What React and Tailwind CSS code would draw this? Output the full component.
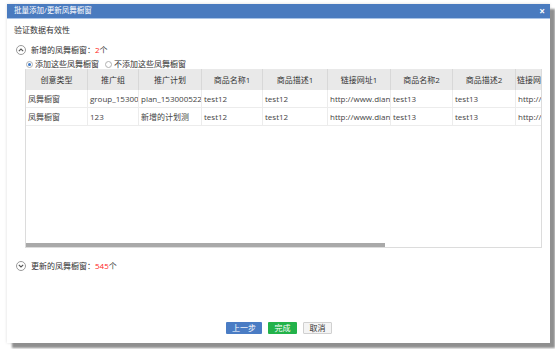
const cols = [
  { title: "创意类型", w: 62 },
  { title: "推广组", w: 51 },
  { title: "推广计划", w: 63 },
  { title: "商品名称1", w: 61 },
  { title: "商品描述1", w: 65 },
  { title: "链接网址1", w: 63 },
  { title: "商品名称2", w: 62 },
  { title: "商品描述2", w: 63 },
  { title: "链接网", w: 27 },
];

const rows = [
  ["凤舞橱窗", "group_15300", "plan_153000522", "test12", "test12", "http://www.dianj", "test13", "test13", "http://"],
  ["凤舞橱窗", "123", "新增的计划测", "test12", "test12", "http://www.dianj", "test13", "test13", "http://"],
];

function CircleIcon({ up }) {
  return (
    <span className="flex h-[10px] w-[10px] items-center justify-center rounded-full border border-[#9a9a9a] bg-white">
      <svg width="6" height="4" viewBox="0 0 6 4">
        <path
          d={up ? "M0.8 3.2 L3 1 L5.2 3.2" : "M0.8 0.8 L3 3 L5.2 0.8"}
          fill="none"
          stroke="#555"
          strokeWidth="1.1"
        />
      </svg>
    </span>
  );
}

function Radio({ checked }) {
  return (
    <span className="flex h-[7px] w-[7px] items-center justify-center rounded-full border border-[#b0b0b0] bg-white">
      {checked && <span className="h-[3px] w-[3px] rounded-full bg-[#3b78c8]" />}
    </span>
  );
}

export default function App() {
  return (
    <div
      className="h-[349px] w-[555px] overflow-hidden bg-white pl-[7px] pt-[4px] text-[8px] text-[#333]"
      style={{ fontFamily: '"Open Sans", "Noto Sans CJK SC", sans-serif' }}
    >
      <div className="flex h-[339px] w-[543px] flex-col bg-white shadow-[5px_5px_2px_#8f8f8f,0_0_3px_#dcdcdc]">
        {/* title bar */}
        <div className="flex h-[15px] items-center justify-between border-b border-[#a9c3e6] bg-[#4a7bbf] pl-[7px] pr-[5px] text-white">
          <span className="text-[7.5px] leading-none">批量添加/更新凤舞橱窗</span>
          <span className="text-[10px] leading-none font-bold">×</span>
        </div>

        <div className="mt-[6px] flex h-[10px] items-center pl-[7px] leading-none">验证数据有效性</div>

        <div className="mt-[10px] flex h-[10px] items-center gap-[5px] pl-[9px] leading-none">
          <CircleIcon up />
          <span>
            新增的凤舞橱窗：<span className="text-[#f22]">2</span>个
          </span>
        </div>

        <div className="mt-[4px] flex h-[10px] items-center pl-[19px] leading-none">
          <Radio checked />
          <span className="ml-[2px]">添加这些凤舞橱窗</span>
          <span className="ml-[6px]"><Radio /></span>
          <span className="ml-[2px]">不添加这些凤舞橱窗</span>
        </div>

        {/* table */}
        <div className="ml-[18px] mr-[8px] flex h-[179px] flex-col overflow-hidden border border-t-0 border-[#dcdcdc]">
          <div className="flex h-[21px] shrink-0 bg-[#e9e9e9]">
            {cols.map((c) => (
              <div
                key={c.title}
                style={{ width: c.w }}
                className="flex shrink-0 items-center justify-center overflow-hidden whitespace-nowrap border-r border-[#d8d8d8] leading-none"
              >
                {c.title}
              </div>
            ))}
          </div>
          {rows.map((r, i) => (
            <div key={i} className="flex h-[18px] shrink-0 border-b border-[#ececec] text-[#444]">
              {r.map((cell, j) => (
                <div
                  key={j}
                  style={{ width: cols[j].w }}
                  className="flex shrink-0 items-center overflow-hidden whitespace-nowrap border-r border-[#ececec] pl-[2px] leading-none"
                >
                  {cell}
                </div>
              ))}
            </div>
          ))}
          <div className="flex-1" />
          <div className="h-[4px] shrink-0 bg-white">
            <div className="h-full w-[359px] bg-[#a9a9a9]" />
          </div>
        </div>

        <div className="mt-[13px] flex h-[10px] items-center gap-[5px] pl-[9px] leading-none">
          <CircleIcon />
          <span>
            更新的凤舞橱窗：<span className="text-[#f22]">545</span>个
          </span>
        </div>

        <div className="flex-1" />

        <div className="mb-[9px] flex justify-center gap-[6px] pl-[1px] text-[8px] leading-none">
          <button className="flex h-[12px] w-[36px] items-center justify-center rounded-[1px] bg-[#4a7cc4] text-white">上一步</button>
          <button className="flex h-[12px] w-[29px] items-center justify-center rounded-[1px] bg-[#23b24a] text-white">完成</button>
          <button className="flex h-[12px] w-[29px] items-center justify-center rounded-[1px] border border-[#d0d0d0] bg-[#f4f4f4] text-[#333]">取消</button>
        </div>
      </div>
    </div>
  );
}
